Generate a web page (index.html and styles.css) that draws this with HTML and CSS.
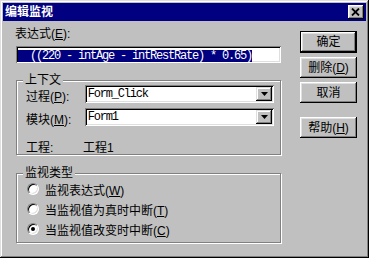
FILE: index.html
```html
<!DOCTYPE html>
<html lang="zh-CN">
<head>
    <meta charset="UTF-8">
    <title>编辑监视</title>
    <link rel="stylesheet" href="styles.css">
</head>
<body>
<div class="window">
    <div class="titlebar">
        <span class="title">编辑监视</span>
        <button class="close" type="button">
            <svg width="9" height="8" viewBox="0 0 9 8"><path d="M1 0.5 L8 7.5 M8 0.5 L1 7.5" stroke="#000" stroke-width="1.8"/></svg>
        </button>
    </div>

    <div class="body">
        <div class="main">
            <label class="caption">表达式(<u>E</u>):</label>
            <div class="field expr"><span class="sel">  ((220 - intAge - intRestRate) * 0.65)</span></div>

            <div class="group context">
                <span class="legend">上下文</span>
                <div class="row">
                    <span class="lbl">过程(<u>P</u>):</span>
                    <div class="combo"><span class="value">Form_Click</span><span class="drop"><svg width="7" height="4" viewBox="0 0 7 4"><path d="M0 0 H7 L3.5 4 Z" fill="#000"/></svg></span></div>
                </div>
                <div class="row">
                    <span class="lbl">模块(<u>M</u>):</span>
                    <div class="combo"><span class="value">Form1</span><span class="drop"><svg width="7" height="4" viewBox="0 0 7 4"><path d="M0 0 H7 L3.5 4 Z" fill="#000"/></svg></span></div>
                </div>
                <div class="row project">
                    <span class="lbl">工程:</span>
                    <span class="proj">工程1</span>
                </div>
            </div>

            <div class="group kind">
                <span class="legend">监视类型</span>
                <div class="opt"><span class="radio"></span><span>监视表达式(<u>W</u>)</span></div>
                <div class="opt"><span class="radio"></span><span>当监视值为真时中断(<u>T</u>)</span></div>
                <div class="opt"><span class="radio on"></span><span>当监视值改变时中断(<u>C</u>)</span></div>
            </div>
        </div>

        <div class="buttons">
            <button class="btn default" type="button">确定</button>
            <button class="btn" type="button">删除(<u>D</u>)</button>
            <button class="btn" type="button">取消</button>
            <button class="btn help" type="button">帮助(<u>H</u>)</button>
        </div>
    </div>
</div>
</body>
</html>
```

FILE: styles.css
```css
* {
    box-sizing: border-box;
}
body {
    margin: 0;
    font-family: "Liberation Sans", "Noto Sans CJK SC", sans-serif;
    font-size: 12px;
    color: #000;
    background: #c0c0c0;
}
.window {
    width: 369px;
    height: 258px;
    padding: 3px;
    background: #c0c0c0;
    box-shadow: inset -1px -1px #000, inset 1px 1px #dfdfdf, inset -2px -2px #808080, inset 2px 2px #fff;
}
.titlebar {
    height: 18px;
    background: #000080;
    display: flex;
    align-items: center;
    justify-content: space-between;
    padding: 0 2px;
}
.title {
    color: #fff;
    font-weight: bold;
    line-height: 14px;
}
.close {
    width: 16px;
    height: 14px;
    border: none;
    padding: 0 1px 1px 0;
    background: #c0c0c0;
    box-shadow: inset -1px -1px #000, inset 1px 1px #fff, inset -2px -2px #808080, inset 2px 2px #dfdfdf;
    display: flex;
    align-items: center;
    justify-content: center;
}
.body {
    display: flex;
    padding: 6px 9px 0 13px;
}
.main {
    width: 265px;
}
.caption {
    display: block;
    line-height: 14px;
    margin-left: -1px;
}
.field {
    background: #fff;
    box-shadow: inset 1px 1px #808080, inset -1px -1px #fff, inset 2px 2px #000, inset -2px -2px #dfdfdf;
}
.expr {
    margin-top: 5px;
    height: 17px;
    padding: 2px;
}
.sel,
.value {
    font-family: "Liberation Mono", monospace;
    font-size: 12px;
    letter-spacing: -1.2px;
    white-space: pre;
}
.sel {
    display: inline-block;
    background: #000080;
    color: #fff;
    line-height: 12px;
    height: 12px;
}
.group {
    position: relative;
    border: 1px solid #808080;
    box-shadow: 1px 1px #fff, inset 1px 1px #fff;
}
.legend {
    position: absolute;
    top: -8px;
    left: 6px;
    padding: 0 2px;
    line-height: 14px;
    background: #c0c0c0;
}
.context {
    margin-top: 17px;
    height: 75px;
    padding: 4px 6px 0 9px;
}
.row {
    display: flex;
    align-items: center;
    height: 18px;
}
.row + .row {
    margin-top: 5px;
}
.row.project {
    margin-top: 12px;
    height: 14px;
}
.lbl {
    width: 59px;
    padding-top: 2px;
}
.proj {
    margin-left: -2px;
    padding-top: 2px;
}
.combo {
    width: 190px;
    height: 18px;
    padding: 2px;
    display: flex;
    align-items: center;
    background: #fff;
    box-shadow: inset 1px 1px #808080, inset -1px -1px #fff, inset 2px 2px #000, inset -2px -2px #dfdfdf;
}
.value {
    flex: 1;
    padding-left: 1px;
    line-height: 14px;
}
.drop {
    width: 16px;
    height: 14px;
    background: #c0c0c0;
    box-shadow: inset -1px -1px #000, inset 1px 1px #dfdfdf, inset -2px -2px #808080, inset 2px 2px #fff;
    display: flex;
    align-items: center;
    justify-content: center;
}
.kind {
    margin-top: 18px;
    height: 70px;
    padding: 5px 0 0 10px;
}
.opt {
    display: flex;
    align-items: center;
    height: 20px;
    gap: 6px;
}
.radio {
    width: 12px;
    height: 12px;
    border-radius: 50%;
    background: #fff;
    border: 1px solid;
    border-color: #808080 #fff #fff #808080;
    box-shadow: inset 1px 1px #000, inset -1px -1px #dfdfdf;
    display: flex;
    align-items: center;
    justify-content: center;
}
.radio.on::after {
    content: "";
    width: 4px;
    height: 4px;
    border-radius: 50%;
    background: #000;
}
.buttons {
    width: 57px;
    margin-left: 19px;
    padding-top: 4px;
    display: flex;
    flex-direction: column;
}
.btn {
    height: 21px;
    margin-bottom: 4px;
    padding: 0;
    border: none;
    font: inherit;
    line-height: 14px;
    background: #c0c0c0;
    box-shadow: inset -1px -1px #000, inset 1px 1px #fff, inset -2px -2px #808080, inset 2px 2px #dfdfdf;
}
.btn.default {
    height: 22px;
    border: 1px solid #000;
}
.btn.help {
    margin-top: 10px;
}
```
